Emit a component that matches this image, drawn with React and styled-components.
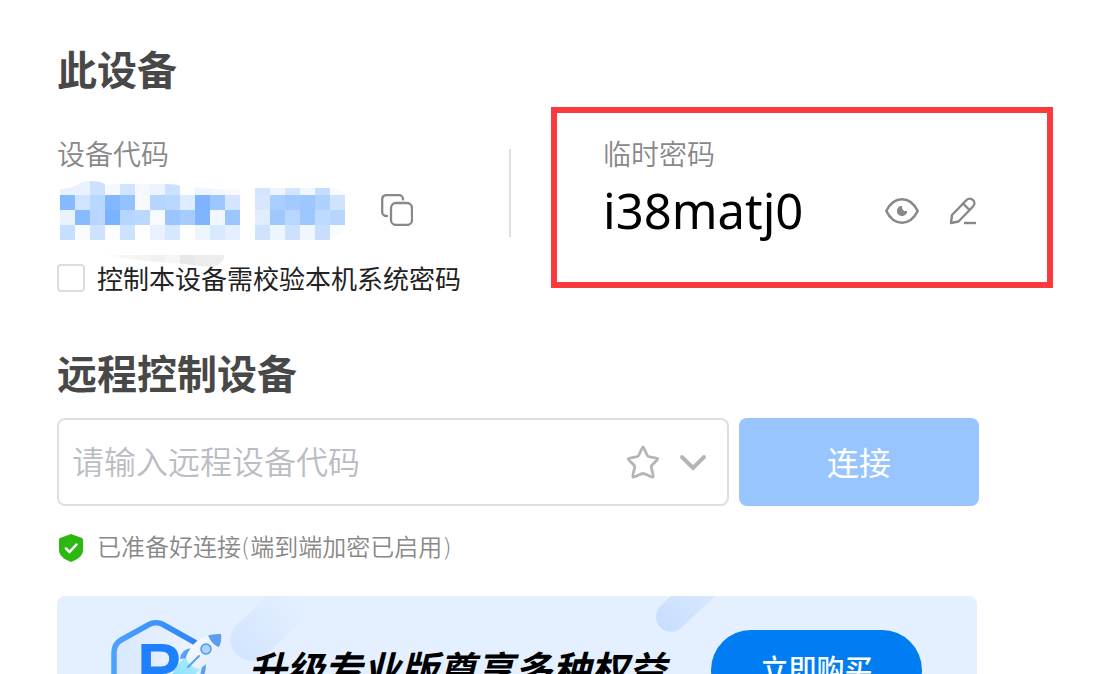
import React, { useState } from "react";
import styled, { createGlobalStyle } from "styled-components";

const GlobalStyle = createGlobalStyle`
  * { box-sizing: border-box; }
  body {
    margin: 0;
    background: #fff;
    color: #222;
    font-family: "Noto Sans", "Noto Sans CJK SC", sans-serif;
  }
  button, input { font: inherit; }
  svg { display: block; flex: none; }
`;

const Page = styled.main`
  height: 100vh;
  overflow: hidden;
  padding: 40px 119px 0 57px;
`;

const Title = styled.h2`
  margin: 0;
  font-family: "Noto Sans CJK SC", sans-serif;
  font-size: 40px;
  line-height: 56px;
  font-weight: 700;
  color: #484848;
`;

const Device = styled.section`
  display: grid;
  grid-template-columns: 452fr 2px 468fr;
  margin: 37px 0 46px;
`;

const Column = styled.div`
  position: relative;
  padding-left: ${(p) => (p.$inset ? "92px" : "0")};
`;

const Divider = styled.div`
  height: 88px;
  margin-top: 16px;
  background: #dfdfdf;
`;

const Label = styled.div`
  font-family: "Noto Sans CJK SC", sans-serif;
  font-size: 28px;
  line-height: 40px;
  font-weight: 350;
  color: #888;
`;

const CodeRow = styled.div`
  display: flex;
  align-items: center;
  height: 60px;
  margin-top: 7px;
  gap: ${(p) => p.$gap};
`;

const Password = styled.output`
  flex: 1;
  font-size: 49px;
  line-height: 60px;
  color: #000;
`;

const IconButton = styled.button`
  display: flex;
  padding: 0;
  border: 0;
  background: none;
  color: ${(p) => p.$color || "#888"};
  cursor: pointer;
`;

const Actions = styled.div`
  display: flex;
  align-items: center;
  gap: 30px;
  padding: 2px 2px 0 0;
`;

const Highlight = styled.div`
  position: absolute;
  inset: -26px -74px 10px 40px;
  border: 6px solid #fc3a3d;
  pointer-events: none;
`;

const CheckRow = styled.label`
  position: relative;
  display: flex;
  align-items: center;
  gap: 12px;
  margin-top: 18px;
  font-family: "Noto Sans CJK SC", sans-serif;
  font-size: 26px;
  line-height: 40px;
  white-space: nowrap;
`;

const Checkbox = styled.input`
  appearance: none;
  flex: none;
  width: 28px;
  height: 28px;
  margin: 0;
  border: 2px solid #ddd;
  border-radius: 4px;
  background: #fff;
  &:checked { background: #007df2; }
`;

const ConnectForm = styled.form`
  display: flex;
  gap: 10px;
  margin-top: 18px;
`;

const Field = styled.div`
  display: flex;
  flex: 1;
  align-items: center;
  gap: 20px;
  height: 88px;
  padding: 0 20px 0 13px;
  border: 2px solid #dfdfdf;
  border-radius: 8px;
`;

const CodeInput = styled.input`
  flex: 1;
  min-width: 0;
  height: 84px;
  padding: 0 0 4px;
  border: 0;
  outline: 0;
  background: none;
  font-family: "Noto Sans CJK SC", sans-serif;
  font-size: 32px;
  font-weight: 350;
  &::placeholder { color: #bbbcc4; opacity: 1; }
`;

const ConnectButton = styled.button`
  flex: none;
  width: 240px;
  padding: 0 0 2px;
  border: 0;
  border-radius: 8px;
  background: #99c5ff;
  color: #fff;
  font-family: "Noto Sans CJK SC", sans-serif;
  font-size: 32px;
`;

const Status = styled.div`
  display: flex;
  align-items: center;
  gap: 12px;
  margin: 26px 0 32px;
  font-family: "DejaVu Sans", "Noto Sans CJK SC", sans-serif;
  font-size: 24px;
  line-height: 32px;
  font-weight: 350;
  color: #888;
`;

const Banner = styled.section`
  position: relative;
  display: flex;
  align-items: center;
  height: 148px;
  margin-right: 2px;
  padding: 0 55px 0 54px;
  overflow: hidden;
  border-radius: 8px;
  background: #e4f0ff;
`;

const Ribbon = styled.div`
  position: absolute;
  left: ${(p) => p.$left};
  top: ${(p) => p.$top};
  width: ${(p) => p.$length};
  height: ${(p) => p.$thickness};
  border-radius: 30px;
  background: linear-gradient(90deg, ${(p) => p.$from}, #e4f0ff);
  transform: rotate(-43deg);
  transform-origin: left center;
`;

const BannerText = styled.strong`
  position: relative;
  flex: 1;
  margin-left: 24px;
  padding-bottom: 4px;
  font-family: "Noto Sans CJK SC", sans-serif;
  font-size: 38px;
  line-height: 56px;
  font-style: italic;
  color: #000;
  white-space: nowrap;
`;

const BuyButton = styled.button`
  position: relative;
  flex: none;
  width: 211px;
  height: 80px;
  padding: 0 0 4px;
  border: 0;
  border-radius: 40px;
  background: #007df2;
  color: #fff;
  font-family: "Noto Sans CJK SC", sans-serif;
  font-size: 28px;
  font-weight: 500;
`;

const MOSAIC = [
  ["#e8f2ff", "#e9f2ff", "#cbe1ff", "#f5f9ff", "#cfe4ff", "#f5f9ff", "#ebf4ff", "#cbe1ff", "#fff", "#edf5ff", "#f3f8ff", "#f7faff", "", "#d2e5ff", "#edf5ff", "#d2e5ff", "#eff6ff", "#c4ddff", "#f8fbff"],
  ["#86b9ff", "#cfe4ff", "#b9d8ff", "#82b6ff", "#94c1ff", "#f7f9ff", "#b3d5ff", "#b9d8ff", "#dfecff", "#7fb3ff", "#9dc7ff", "#d3e5ff", "", "#d6e7ff", "#a9ceff", "#a2caff", "#9fc7ff", "#afd1ff", "#cfe3ff"],
  ["#e8f3ff", "#87baff", "#b8d6ff", "#7bb2ff", "#b7d6ff", "#bbd9ff", "#f7faff", "#9cc5ff", "#a6ccff", "#7fb5ff", "#f1f6ff", "#9bc6ff", "", "#dfedff", "#9fc8ff", "#b7d7ff", "#9dc7ff", "#bddaff", "#b7d6ff"],
  ["#c6deff", "#f8fcff", "#cde2ff", "#fbfdff", "#cde2ff", "#fff", "#e9f1ff", "#d5e8ff", "#fff", "#edf5ff", "#d9e9ff", "#e4f0ff", "", "#cfe3ff", "#edf5ff", "#cbe1ff", "#f0f7ff", "#c9deff", "#fafcff"],
];

const SMUDGE = ["#fafafa", "#f5f5f5", "#f4f4f4", "#f1f1f1", "#f6f6f6", "#e8e8e8", "#ededed", "#eeeeee"];

function MaskedCode() {
  return (
    <svg width="288" height="60" viewBox="-3 0 288 60" overflow="visible" role="img" aria-label="设备代码">
      <defs>
        <clipPath id="code">
          <path d="M0 9Q9 9 15 6Q22 1 30 1Q42 1 46 5L60 4H105Q118 4 120 6V10L135 7Q150 10 180 9V60H0ZM195 8H268Q281 9 285 13V47Q281 57 269 60H195Z" />
        </clipPath>
        <clipPath id="smudge">
          <path d="M45 75H165Q163 84 154 87Q140 87 125 84Q85 82 45 75Z" />
        </clipPath>
      </defs>
      <g clipPath="url(#code)" shapeRendering="crispEdges">
        {MOSAIC.map((row, y) =>
          row.map((fill, x) =>
            fill ? (
              <rect key={`${x}-${y}`} x={x * 15} y={y * 15} width="15" height="15" fill={fill} />
            ) : null
          )
        )}
      </g>
      <g clipPath="url(#smudge)">
        {SMUDGE.map((fill, i) => (
          <rect key={i} x={45 + i * 15} y="75" width="15" height="13" fill={fill} />
        ))}
      </g>
    </svg>
  );
}

const line = { fill: "none", stroke: "currentColor", strokeLinecap: "round", strokeLinejoin: "round" };

const CopyIcon = () => (
  <svg width="32" height="32" viewBox="0 0 32 32" {...line} strokeWidth="2.300">
    <rect x="10" y="9" width="21" height="22" rx="5" />
    <path d="M22 5.500V5A4 4 0 0 0 18 1.200H5A4 4 0 0 0 1.200 5V18A4 4 0 0 0 5 22H6" />
  </svg>
);

const EyeIcon = () => (
  <svg width="34" height="26" viewBox="0 0 34 26" {...line} strokeWidth="2.600">
    <path d="M1.300 13C5 5.500 10.500 1.300 17 1.300S29 5.500 32.700 13C29 20.500 23.500 24.700 17 24.700S5 20.500 1.300 13Z" />
    <path d="M17 8A5 5 0 1 0 22 13A4 4 0 0 1 17 8Z" fill="currentColor" stroke="none" />
    <path d="M17 8V11A2 2 0 0 0 19 13H22A5 5 0 1 1 17 8Z" fill="currentColor" stroke="none" />
  </svg>
);

const EditIcon = () => (
  <svg width="28" height="28" viewBox="0 0 28 28" {...line} strokeWidth="2.400">
    <path d="M2 26L3 18L17.500 3A4.500 4.500 0 0 1 24 9.500L9.500 24.500Z" />
    <path d="M14 6.500L20.500 13" />
    <path d="M15 26H27" strokeLinecap="butt" />
  </svg>
);

const StarIcon = () => (
  <svg width="32" height="34" viewBox="0 0 32 34" {...line} strokeWidth="2.800">
    <path d="M16 2C17 2 19.500 10 21 11.300C22.500 12.300 30.500 12.500 30.800 13.800C31 15 24.800 19.500 24.300 21.300C24 23.300 27.200 31 26 32C24.800 32.700 18.500 28.500 16 28.500S7.200 32.700 6 32C4.800 31 8 23.300 7.700 21.300C7.200 19.500 1 15 1.200 13.800C1.500 12.500 9.500 12.300 11 11.300C12.500 10 15 2 16 2Z" />
  </svg>
);

const ChevronIcon = () => (
  <svg width="28" height="18" viewBox="0 0 28 18" {...line} strokeWidth="4">
    <path d="M3 4L14 15L25 4" strokeLinejoin="miter" />
  </svg>
);

const ShieldIcon = () => (
  <svg width="28" height="28" viewBox="-1 0 28 28">
    <path d="M13 0L24 4Q25 4.500 25 6V16C25 21 21 25 13 28C5 25 1 21 1 16V6Q1 4.500 2 4Z" fill="#2cb811" />
    <path d="M8 14.500L11.500 18L18.500 10.500" fill="none" stroke="#fff" strokeWidth="2.500" strokeLinecap="round" />
  </svg>
);

function ProLogo() {
  return (
    <svg width="113" height="100" viewBox="0 0 113 100">
      <defs>
        <linearGradient id="ring" x1="0" x2="1">
          <stop offset="0" stopColor="#4ca3fc" />
          <stop offset="1" stopColor="#2c83fa" />
        </linearGradient>
        <linearGradient id="plate" x1="0" x2="1">
          <stop offset="0" stopColor="#d8e8ff" />
          <stop offset="1" stopColor="#edf5ff" />
        </linearGradient>
        <linearGradient id="hull" x1="0" x2="1" y1="0" y2="1">
          <stop offset="0" stopColor="#fff" />
          <stop offset="1" stopColor="#dbe7f8" />
        </linearGradient>
        <linearGradient id="flame" x1="1" x2="0" y1="0" y2="1">
          <stop offset="0" stopColor="#b5f1ff" />
          <stop offset="1" stopColor="#7bd8ff" />
        </linearGradient>
      </defs>
      <path d="M38 4.500Q45 1 52 4.500L80 20Q87 24 87 33V68Q87 76 80 80L52 95Q45 99 38 95L10 80Q3 76 3 68V33Q3 24 10 20Z" fill="url(#plate)" />
      <path d="M87 72Q86 77 80 80L52 95Q45 99 38 95L10 80Q3 76 3 68V33Q3 24 10 20L38 4.500Q45 1 52 4.500L85 23" fill="none" stroke="url(#ring)" strokeWidth="5.500" />
      <text x="26" y="70" fontFamily="Liberation Sans, sans-serif" fontSize="66" fontWeight="700" fill="#1c80ff">P</text>
      <path d="M76 36L89 49Q82 61 58 68Q60 48 76 36Z" fill="url(#flame)" />
      <path d="M81 28Q70 29 69 39L76 38ZM91 47L88 60Q95 57 95 44Z" fill="#5c9ff2" />
      <path d="M75 37Q82 19 99 15L110 14Q111 23 106 31Q100 42 88 49Q77 46 75 37Z" fill="url(#hull)" />
      <path d="M97 15.500Q103 13.500 110 14Q111 21 108 27Q101 25 97 15.500Z" fill="#5b9df1" />
      <circle cx="95" cy="29" r="5" fill="#a8d5ff" stroke="#4c98ef" strokeWidth="1.500" />
      <path d="M88 36L77 47" stroke="#5c9ff2" strokeWidth="2" strokeLinecap="round" />
    </svg>
  );
}

export default function App() {
  const [verify, setVerify] = useState(false);
  return (
    <Page>
      <GlobalStyle />
      <Title>此设备</Title>
      <Device>
        <Column>
          <Label>设备代码</Label>
          <CodeRow $gap="36px">
            <MaskedCode />
            <IconButton aria-label="复制"><CopyIcon /></IconButton>
          </CodeRow>
          <CheckRow>
            <Checkbox type="checkbox" checked={verify} onChange={(e) => setVerify(e.target.checked)} />
            控制本设备需校验本机系统密码
          </CheckRow>
        </Column>
        <Divider />
        <Column $inset>
          <Label>临时密码</Label>
          <CodeRow>
            <Password>i38matj0</Password>
            <Actions>
              <IconButton aria-label="显示"><EyeIcon /></IconButton>
              <IconButton aria-label="编辑"><EditIcon /></IconButton>
            </Actions>
          </CodeRow>
          <Highlight />
        </Column>
      </Device>
      <Title>远程控制设备</Title>
      <ConnectForm onSubmit={(e) => e.preventDefault()}>
        <Field>
          <CodeInput aria-label="远程设备代码" placeholder="请输入远程设备代码" />
          <IconButton type="button" $color="#b5b5b5" aria-label="收藏"><StarIcon /></IconButton>
          <IconButton type="button" $color="#b5b5b5" aria-label="展开"><ChevronIcon /></IconButton>
        </Field>
        <ConnectButton type="submit">连接</ConnectButton>
      </ConnectForm>
      <Status>
        <ShieldIcon />
        已准备好连接(端到端加密已启用)
      </Status>
      <Banner>
        <Ribbon $left="179px" $top="37px" $length="84px" $thickness="42px" $from="#d3e4ff" />
        <Ribbon $left="603px" $top="16px" $length="110px" $thickness="30px" $from="#c8deff" />
        <ProLogo />
        <BannerText>升级专业版尊享多种权益</BannerText>
        <BuyButton>立即购买</BuyButton>
      </Banner>
    </Page>
  );
}
